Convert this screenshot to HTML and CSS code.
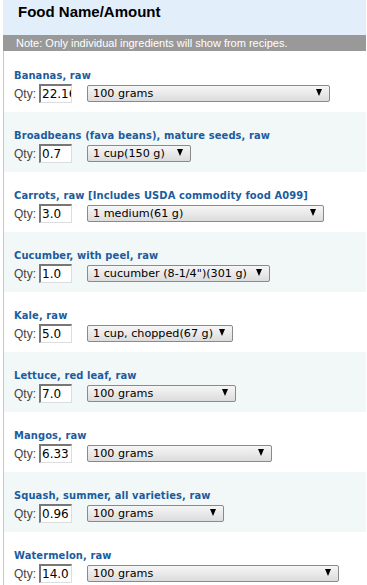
FILE: index.html
```html
<!DOCTYPE html>
<html>
<head>
<meta charset="utf-8">
<link rel="stylesheet" href="styles.css">
</head>
<body>
<div class="panel">
  <div class="head"><h1>Food Name/Amount</h1></div>
  <div class="note">Note: Only individual ingredients will show from recipes.</div>
  <div class="list">
    <div class="row first">
      <div class="name">Bananas, raw</div>
      <div class="ctrl"><span class="lbl">Qty:</span><span class="qty">22.16</span><span class="sel w-banana"><span class="val">100 grams</span><span class="arr"></span></span></div>
    </div>
    <div class="row alt">
      <div class="name">Broadbeans (fava beans), mature seeds, raw</div>
      <div class="ctrl"><span class="lbl">Qty:</span><span class="qty">0.7</span><span class="sel w-bean"><span class="val">1 cup(150 g)</span><span class="arr"></span></span></div>
    </div>
    <div class="row">
      <div class="name">Carrots, raw [Includes USDA commodity food A099]</div>
      <div class="ctrl"><span class="lbl">Qty:</span><span class="qty">3.0</span><span class="sel w-carrot"><span class="val">1 medium(61 g)</span><span class="arr"></span></span></div>
    </div>
    <div class="row alt">
      <div class="name">Cucumber, with peel, raw</div>
      <div class="ctrl"><span class="lbl">Qty:</span><span class="qty">1.0</span><span class="sel w-cuke"><span class="val">1 cucumber (8-1/4")(301 g)</span><span class="arr"></span></span></div>
    </div>
    <div class="row">
      <div class="name">Kale, raw</div>
      <div class="ctrl"><span class="lbl">Qty:</span><span class="qty">5.0</span><span class="sel w-kale"><span class="val">1 cup, chopped(67 g)</span><span class="arr"></span></span></div>
    </div>
    <div class="row alt">
      <div class="name">Lettuce, red leaf, raw</div>
      <div class="ctrl"><span class="lbl">Qty:</span><span class="qty">7.0</span><span class="sel w-lettuce"><span class="val">100 grams</span><span class="arr"></span></span></div>
    </div>
    <div class="row">
      <div class="name">Mangos, raw</div>
      <div class="ctrl"><span class="lbl">Qty:</span><span class="qty">6.33</span><span class="sel w-mango"><span class="val">100 grams</span><span class="arr"></span></span></div>
    </div>
    <div class="row alt">
      <div class="name">Squash, summer, all varieties, raw</div>
      <div class="ctrl"><span class="lbl">Qty:</span><span class="qty">0.96</span><span class="sel w-squash"><span class="val">100 grams</span><span class="arr"></span></span></div>
    </div>
    <div class="row">
      <div class="name">Watermelon, raw</div>
      <div class="ctrl"><span class="lbl">Qty:</span><span class="qty">14.0</span><span class="sel w-melon"><span class="val">100 grams</span><span class="arr"></span></span></div>
    </div>
  </div>
</div>
</body>
</html>
```
FILE: styles.css
```css
html, body {
  margin: 0;
  padding: 0;
  background: #fff;
}
.panel {
  margin-left: 3px;
  width: 363px;
  font-family: "Liberation Sans", Arial, sans-serif;
}
.head {
  height: 35px;
  background: #e2eef9;
  box-sizing: border-box;
  padding: 3px 0 0 15px;
}
.head h1 {
  margin: 0;
  font-size: 15px;
  line-height: 18px;
  font-weight: bold;
  color: #000;
}
.note {
  height: 16px;
  line-height: 16px;
  background: #999;
  color: #fff;
  font-size: 11px;
  padding-left: 13px;
}
.list {
  border-left: 1px solid #c8c8c8;
}
.row {
  height: 60px;
  box-sizing: border-box;
  padding: 16px 0 0 10px;
}
.row.first {
  height: 61px;
  padding-top: 17px;
}
.row.alt {
  background: #f2f7f8;
}
.name {
  font-family: "DejaVu Sans Condensed", "DejaVu Sans", Verdana, sans-serif;
  font-stretch: condensed;
  font-weight: bold;
  font-size: 11px;
  letter-spacing: 0.12px;
  line-height: 16px;
  color: #1b5c9e;
  white-space: nowrap;
}
.ctrl {
  display: flex;
  align-items: center;
  height: 19px;
}
.lbl {
  font-size: 12px;
  color: #444;
  margin-right: 3px;
}
.qty {
  box-sizing: border-box;
  width: 33px;
  height: 19px;
  background: #fff;
  border-style: solid;
  border-width: 2px 1px 1px 2px;
  border-color: #777 #ddd #ddd #777;
  font-family: "DejaVu Sans", Verdana, sans-serif;
  font-size: 12px;
  line-height: 16px;
  padding-left: 1px;
  overflow: hidden;
  white-space: nowrap;
  color: #000;
}
.sel {
  box-sizing: border-box;
  height: 17px;
  margin-left: 15px;
  display: flex;
  align-items: center;
  justify-content: space-between;
  border: 1px solid #8a8a8a;
  border-radius: 2px;
  background: linear-gradient(#f6f6f6, #dcdcdc);
  padding: 0 7px 0 5px;
  font-family: "DejaVu Sans", Verdana, sans-serif;
  font-size: 11.2px;
  color: #000;
  white-space: nowrap;
}
.arr {
  width: 0;
  height: 0;
  border-left: 3.5px solid transparent;
  border-right: 3.5px solid transparent;
  border-top: 7px solid #000;
  margin-top: -2px;
}
.w-banana { width: 243px; }
.w-bean { width: 104px; }
.w-carrot { width: 237px; }
.w-cuke { width: 183px; }
.w-kale { width: 146px; }
.w-lettuce { width: 149px; }
.w-mango { width: 185px; }
.w-squash { width: 137px; }
.w-melon { width: 252px; }
```
